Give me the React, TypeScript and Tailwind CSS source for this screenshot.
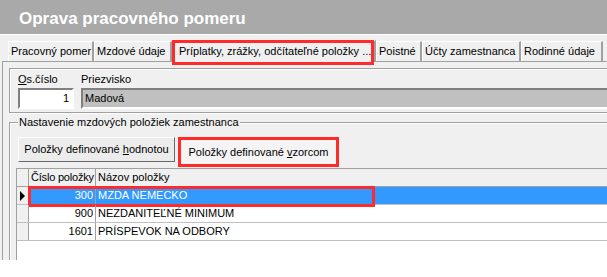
import React from "react";

const font = { fontFamily: '"Liberation Sans", Arial, sans-serif' };

function Tab({ label, w, selected }: { label: React.ReactNode; w: number; selected?: boolean }) {
  return (
    <div
      className={
        "relative flex items-center text-[11px] text-black border-l border-t border-white border-r-2 border-r-[#a0a0a0] " +
        (selected ? "h-[22px] -mb-[1px] -mt-[2px] z-10 bg-[#f0f0f0] pl-[6px] pr-[3px]" : "h-[20px] px-[2px]")
      }
      style={{ width: w }}
    >
      <span className={"whitespace-nowrap " + (selected ? "overflow-hidden" : "")}>{label}</span>
      {selected && (
        <div className="absolute -left-[1px] -top-[1px] w-[202px] h-[25px] border-[3px] border-[#ff2a2a]" />
      )}
    </div>
  );
}

export default function App() {
  const rows = [
    { n: "300", name: "MZDA NEMECKO", sel: true },
    { n: "900", name: "NEZDANITEĽNÉ MINIMUM" },
    { n: "1601", name: "PRÍSPEVOK NA ODBORY" },
  ];
  return (
    <div className="w-[607px] h-[277px] bg-white overflow-hidden" style={font}>
      <div className="h-[260px] bg-[#f0f0f0] flex flex-col">
        <div className="h-[35px] bg-[#a9a9a9] border-b border-white flex items-center pl-[19px] pt-[3px] shrink-0">
          <span className="text-white font-bold text-[17px]">Oprava pracovného pomeru</span>
        </div>
        {/* tabs */}
        <div className="flex pl-[8px] pt-[6px] shrink-0 items-end">
          <Tab label="Pracovný pomer" w={86} />
          <Tab label="Mzdové údaje" w={78} />
          <Tab label="Príplatky, zrážky, odčítateľné položky ..." w={204} selected />
          <Tab label="Poistné" w={46} />
          <Tab label="Účty zamestnanca" w={99} />
          <Tab label="Rodinné údaje" w={82} />
        </div>
        {/* tab panel */}
        <div className="flex-1 ml-[2px] border-l border-t border-white relative flex flex-col">
          <div className="absolute left-[-1px] top-0 bottom-0 w-[1px] bg-[#a0a0a0]" />
          <div className="absolute left-[-1px] top-[-1px] right-0 h-[1px] bg-[#a0a0a0]" />
          {/* group 1 */}
          <div className="ml-[6px] mt-[6px] h-[45px] border border-[#a0a0a0] shadow-[inset_1px_1px_0_#fff,1px_1px_0_#fff] border-r-0 flex pl-[8px] pt-[3px] gap-[7px]">
            <div className="flex flex-col w-[56px]">
              <span className="text-[11px] leading-[14px] h-[16px] whitespace-nowrap"><u>O</u>s.číslo</span>
              <div className="h-[21px] bg-white border-2 border-t-[#808080] border-l-[#808080] border-b-white border-r-white text-[11px] text-right pr-[3px] leading-[17px]">1</div>
            </div>
            <div className="flex flex-col flex-1">
              <span className="text-[11px] leading-[14px] h-[16px]">Priezvisko</span>
              <div className="h-[21px] bg-[#c0c0c0] border-2 border-t-[#808080] border-l-[#808080] border-b-white border-r-0 text-[11px] pl-[2px] leading-[17px]">Madová</div>
            </div>
          </div>
          {/* group 2 */}
          <div className="ml-[6px] mt-[9px] flex-1 border-t border-l border-[#a0a0a0] shadow-[inset_1px_1px_0_#fff] relative flex flex-col pl-[6px]">
            <span className="absolute left-[8px] -top-[8px] px-[1px] bg-[#f0f0f0] text-[11px] leading-[14px] whitespace-nowrap">Nastavenie mzdových položiek zamestnanca</span>
            <div className="flex gap-[3px] mt-[14px] pl-[2px]">
              <div className="w-[157px] h-[25px] border border-t-white border-l-white border-r-[#696969] border-b-[#696969] bg-[#ececec] flex items-center justify-center text-[11px] whitespace-nowrap">
                <span>Položky definované <u>h</u>odnotou</span>
              </div>
              <div className="relative w-[161px] h-[30px] bg-[#f4f4f4] flex items-center justify-center text-[11px] whitespace-nowrap">
                <span>Položky definované <u>v</u>zorcom</span>
                <div className="absolute inset-0 border-[3px] border-[#ff2a2a]" />
              </div>
            </div>
            {/* grid */}
            <div className="flex-1 mt-[1px] bg-white border-t border-l border-[#a0a0a0] flex flex-col text-[11px]">
              <div className="flex h-[18px] bg-[#f0f0f0] border-b border-[#a0a0a0] shrink-0">
                <div className="w-[12px] border-r border-[#a0a0a0]" />
                <div className="w-[67px] border-r border-[#a0a0a0] pl-[2px] leading-[17px] whitespace-nowrap overflow-hidden tracking-[-0.2px]">Číslo položky</div>
                <div className="flex-1 pl-[2px] leading-[17px] whitespace-nowrap">Názov položky</div>
              </div>
              {rows.map((r, i) => (
                <div key={i} className="flex h-[18px] border-b border-[#c0c0c0] shrink-0 relative">
                  <div className="w-[12px] bg-[#f0f0f0] border-r border-[#a0a0a0] flex items-center justify-center">
                    {r.sel && (
                      <svg width="6" height="10" viewBox="0 0 6 10"><path d="M0 0 L5 5 L0 10 Z" fill="#000" /></svg>
                    )}
                  </div>
                  <div className={"w-[67px] border-r border-[#a0a0a0] text-right pr-[2px] leading-[17px] " + (r.sel ? "bg-[#3399ff] text-white" : "")}>{r.n}</div>
                  <div className={"flex-1 pl-[2px] leading-[17px] whitespace-nowrap " + (r.sel ? "bg-[#3399ff] text-white" : "")}>{r.name}</div>
                  {r.sel && <div className="absolute left-[11px] top-[-1px] w-[347px] h-[21px] border-[3px] border-[#ff2a2a]" />}
                </div>
              ))}
            </div>
          </div>
        </div>
      </div>
    </div>
  );
}
